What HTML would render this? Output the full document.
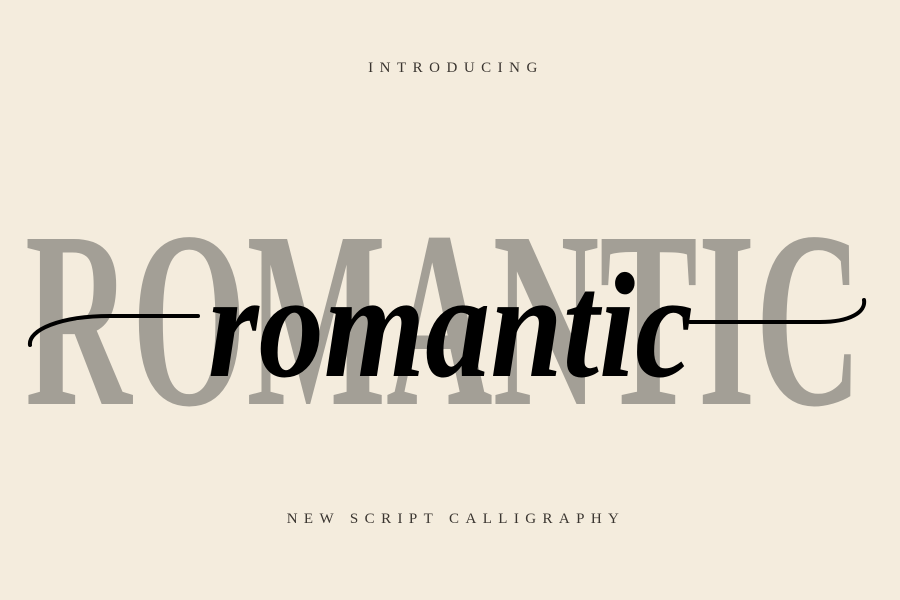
<!DOCTYPE html>
<html><head><style>
html,body{margin:0;padding:0;width:900px;height:600px;overflow:hidden;background:#f4ecdd;}
.t{position:absolute;left:0;width:900px;text-align:center;font-family:"Liberation Serif",serif;color:#3a3530;}
</style></head><body>
<div class="t" style="top:60px;font-size:15px;letter-spacing:6.5px;padding-left:6px;">INTRODUCING</div>
<svg width="900" height="600" style="position:absolute;left:0;top:0">
<text x="25" y="404" font-family="Liberation Serif" font-weight="bold" font-size="252" fill="#a39f96" textLength="837" lengthAdjust="spacingAndGlyphs">ROMANTIC</text>
<path d="M30 345 C28 330 60 316 110 316 L198 316" stroke="#000" stroke-width="4" fill="none" stroke-linecap="round"/>
<path d="M690 322 L820 322 C850 322 866 312 864 300" stroke="#000" stroke-width="4" fill="none" stroke-linecap="round"/>
<text x="208" y="376" font-family="Liberation Serif" font-style="italic" font-weight="bold" font-size="150" fill="#000" textLength="485" lengthAdjust="spacingAndGlyphs">romantic</text>
</svg>
<div class="t" style="top:511px;font-size:15px;letter-spacing:6.4px;padding-left:6px;">NEW SCRIPT CALLIGRAPHY</div>
</body></html>
